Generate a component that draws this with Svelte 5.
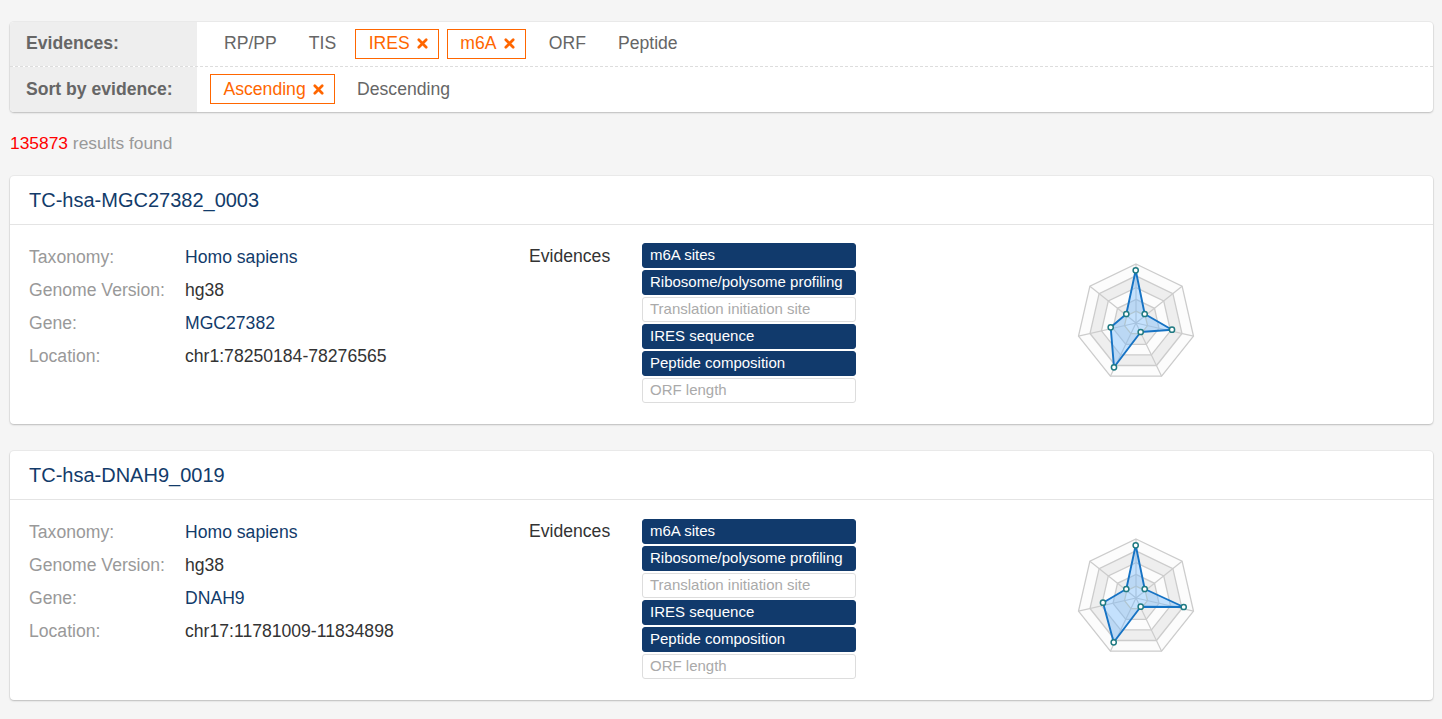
<script>
	const evidences = [
		{ label: 'm6A sites', on: true },
		{ label: 'Ribosome/polysome profiling', on: true },
		{ label: 'Translation initiation site', on: false },
		{ label: 'IRES sequence', on: true },
		{ label: 'Peptide composition', on: true },
		{ label: 'ORF length', on: false }
	];

	const results = [
		{
			id: 'TC-hsa-MGC27382_0003',
			gene: 'MGC27382',
			location: 'chr1:78250184-78276565',
			points: [[75.7, 20.3], [84.7, 64], [112, 79.7], [80.7, 82], [54, 117.3], [50.7, 77.3], [66.3, 64]]
		},
		{
			id: 'TC-hsa-DNAH9_0019',
			gene: 'DNAH9',
			location: 'chr17:11781009-11834898',
			points: [[75.7, 20.3], [84.7, 64], [123.7, 82], [80.7, 81.7], [53.7, 117.3], [43, 77.7], [66.3, 64]]
		}
	];

	const cx = 76;
	const cy = 73;
	const step = 11.8;

	function ring(r) {
		const out = [];
		for (let i = 0; i < 7; i++) {
			const a = -Math.PI / 2 + (i * 2 * Math.PI) / 7;
			out.push((cx + r * Math.cos(a)).toFixed(1) + ',' + (cy + r * Math.sin(a)).toFixed(1));
		}
		return out.join(' ');
	}

	const rings = [5, 4, 3, 2, 1];
	const spokes = ring(step * 5).split(' ').map((p) => p.split(','));
</script>

<div class="page">
	<section class="filter">
		<div class="filter-row">
			<div class="filter-label">Evidences:</div>
			<div class="filter-items first">
				<span class="chip">RP/PP</span>
				<span class="chip">TIS</span>
				<span class="chip active">IRES {@render cross()}</span>
				<span class="chip active">m6A {@render cross()}</span>
				<span class="chip">ORF</span>
				<span class="chip">Peptide</span>
			</div>
		</div>
		<div class="filter-row second">
			<div class="filter-label">Sort by evidence:</div>
			<div class="filter-items">
				<span class="chip active">Ascending {@render cross()}</span>
				<span class="chip">Descending</span>
			</div>
		</div>
	</section>

	<p class="count"><span class="num">135873</span> results found</p>

	{#each results as r}
		<article class="card">
			<h2 class="card-title">{r.id}</h2>
			<div class="card-body">
				<dl class="info">
					<dt>Taxonomy:</dt>
					<dd class="link">Homo sapiens</dd>
					<dt>Genome Version:</dt>
					<dd>hg38</dd>
					<dt>Gene:</dt>
					<dd class="link">{r.gene}</dd>
					<dt>Location:</dt>
					<dd>{r.location}</dd>
				</dl>
				<div class="ev-title">Evidences</div>
				<ul class="pills">
					{#each evidences as e}
						<li class="pill" class:on={e.on}>{e.label}</li>
					{/each}
				</ul>
				<svg class="radar" width="152" height="135" viewBox="0 0 152 135">
					{#each rings as n}
						<polygon
							points={ring(n * step)}
							fill={n === 4 || n === 2 ? '#eeeeee' : '#fcfcfc'}
							stroke={n === 1 ? '#dccfb4' : '#cccccc'}
							stroke-width="1.3"
						/>
					{/each}
					{#each spokes as s}
						<line x1={cx} y1={cy} x2={s[0]} y2={s[1]} stroke="#cccccc" stroke-width="1.2" />
					{/each}
					<polygon
						points={r.points.map((p) => p.join(',')).join(' ')}
						fill="#6ab6ff"
						fill-opacity="0.38"
						stroke="#1673c4"
						stroke-width="1.9"
						stroke-linejoin="round"
					/>
					{#each r.points as p}
						<circle cx={p[0]} cy={p[1]} r="2.6" fill="#fff" stroke="#1f7a82" stroke-width="1.5" />
					{/each}
				</svg>
			</div>
		</article>
	{/each}
</div>

{#snippet cross()}
	<svg class="x" width="11" height="11" viewBox="0 0 11 11">
		<path d="M1.8 1.8 9.2 9.2M9.2 1.8 1.8 9.2" stroke="#ff6600" stroke-width="2.7" fill="none" stroke-linecap="round" />
	</svg>
{/snippet}

<style>
	:global(body) {
		background: #f5f5f5;
		font-family: 'Liberation Sans', Arial, sans-serif;
		font-size: 17.6px;
		color: #333;
	}

	.page {
		padding: 22px 9px 18px 10px;
	}

	.filter {
		background: #fff;
		border-radius: 4px;
		box-shadow: 0 0 0 1px rgba(0, 0, 0, 0.04), 0 1px 2px rgba(0, 0, 0, 0.2);
		overflow: hidden;
		height: 90px;
	}

	.filter-row {
		display: flex;
		height: 44px;
	}

	.filter-row.second {
		height: 46px;
		border-top: 1px dashed #ddd;
		box-sizing: border-box;
	}

	.filter-label {
		width: 171px;
		padding: 0 0 2px 16px;
		background: #eeeeee;
		font-weight: 700;
		color: #666;
		display: flex;
		align-items: center;
	}

	.second .filter-label {
		padding-bottom: 0;
	}

	.filter-items {
		display: flex;
		align-items: center;
		gap: 5px;
		padding: 0 0 1px 13px;
	}

	.filter-items.first {
		gap: 6px;
		padding-left: 14px;
	}

	.chip {
		display: flex;
		align-items: center;
		height: 30px;
		box-sizing: border-box;
		padding: 0 12px 1px;
		border: 1px solid transparent;
		color: #666;
	}

	.second .chip {
		padding-bottom: 0;
	}

	.chip.active {
		border-color: #ff6600;
		color: #ff6600;
		gap: 7.5px;
		padding-left: 12.5px;
		padding-right: 10px;
	}

	.chip.active + .chip {
		margin-left: 1.5px;
	}

	.chip.active + .chip:not(.active) {
		margin-left: 3.9px;
	}

	.x {
		display: block;
	}

	.count {
		margin: 21px 0 22.85px;
		line-height: 20px;
		color: #999;
		font-size: 17.4px;
	}

	.num {
		color: #ff0000;
	}

	.card {
		background: #fff;
		border-radius: 4px;
		box-shadow: 0 0 0 1px rgba(0, 0, 0, 0.04), 0 1px 2px rgba(0, 0, 0, 0.2);
		margin-bottom: 26.75px;
		height: 248.5px;
	}

	.card-title {
		margin: 0;
		padding: 0 19px;
		height: 48.2px;
		line-height: 48px;
		font-size: 20px;
		font-weight: 400;
		color: #123b6a;
		border-bottom: 1px solid #e4e4e4;
	}

	.card-body {
		display: flex;
		align-items: flex-start;
		padding: 14.6px 19px 0;
	}

	.info {
		display: grid;
		grid-template-columns: 156px 1fr;
		grid-auto-rows: 33px;
		width: 500px;
		margin: 0.9px 0 0;
		align-items: center;
	}

	.info dt {
		color: #999;
	}

	.info dd {
		margin: 0;
		color: #333;
	}

	.info dd.link {
		color: #123b6a;
	}

	.ev-title {
		width: 113px;
		line-height: 33px;
		margin-top: 0.6px;
	}

	.pills {
		list-style: none;
		margin: 3.7px 0 0;
		padding: 0;
		width: 214px;
		display: flex;
		flex-direction: column;
		gap: 2px;
	}

	.pill {
		height: 25px;
		line-height: 22.8px;
		box-sizing: border-box;
		padding: 0 7px;
		border: 1px solid #ddd;
		border-radius: 3px;
		font-size: 15px;
		color: #aaa;
		background: #fff;
	}

	.pill.on {
		background: #113a6c;
		border-color: #113a6c;
		color: #fff;
	}

	.radar {
		display: block;
		margin-left: 204px;
		margin-top: 10.6px;
	}
</style>
